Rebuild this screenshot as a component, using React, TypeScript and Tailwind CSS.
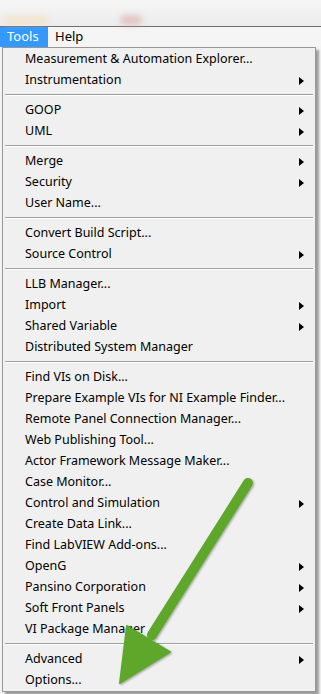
import { Fragment } from "react";

type Item = { label: string; sub?: boolean };

// groups of menu items, separator between each group
const groups: Item[][] = [
  [{ label: "Measurement & Automation Explorer..." }, { label: "Instrumentation", sub: true }],
  [{ label: "GOOP", sub: true }, { label: "UML", sub: true }],
  [{ label: "Merge", sub: true }, { label: "Security", sub: true }, { label: "User Name..." }],
  [{ label: "Convert Build Script..." }, { label: "Source Control", sub: true }],
  [
    { label: "LLB Manager..." },
    { label: "Import", sub: true },
    { label: "Shared Variable", sub: true },
    { label: "Distributed System Manager" },
  ],
  [
    { label: "Find VIs on Disk..." },
    { label: "Prepare Example VIs for NI Example Finder..." },
    { label: "Remote Panel Connection Manager..." },
    { label: "Web Publishing Tool..." },
    { label: "Actor Framework Message Maker..." },
    { label: "Case Monitor..." },
    { label: "Control and Simulation", sub: true },
    { label: "Create Data Link..." },
    { label: "Find LabVIEW Add-ons..." },
    { label: "OpenG", sub: true },
    { label: "Pansino Corporation", sub: true },
    { label: "Soft Front Panels", sub: true },
    { label: "VI Package Manager" },
  ],
  [{ label: "Advanced", sub: true }, { label: "Options..." }],
];

function MenuRow({ item }: { item: Item }) {
  return (
    <div className="h-[21px] flex items-center pl-[22px] pr-[11px] justify-between">
      <span className="whitespace-nowrap">{item.label}</span>
      {item.sub && (
        <span className="w-0 h-0 border-y-[4px] border-y-transparent border-l-[5px] border-l-black" />
      )}
    </div>
  );
}

function GreenArrow() {
  return (
    <svg
      className="absolute left-0 top-0 pointer-events-none"
      width="321"
      height="694"
      viewBox="0 0 321 694"
    >
      <defs>
        <filter id="sh" x="-20%" y="-20%" width="140%" height="140%">
          <feDropShadow dx="1" dy="1" stdDeviation="1.2" floodColor="#000" floodOpacity="0.35" />
        </filter>
      </defs>
      <g filter="url(#sh)" fill="#5ea72c" stroke="#5ea72c">
        <line x1="248" y1="483" x2="152" y2="635" strokeWidth="10" strokeLinecap="round" />
        <polygon points="120,683 127,626 170,652" strokeWidth="2" strokeLinejoin="round" />
      </g>
    </svg>
  );
}

export default function App() {
  return (
    <div
      className="relative w-[321px] h-[694px] overflow-hidden bg-[#f3f3f3] text-black text-[12.5px]"
      style={{ fontFamily: '"Noto Sans", "Liberation Sans", sans-serif' }}
    >
      {/* blurred window behind */}
      <div className="h-[26px] bg-gradient-to-b from-[#f6f6f6] to-[#ececec] relative">
        <div className="absolute left-[4px] top-[16px] w-[44px] h-[8px] bg-[#f3d9a8] opacity-50 blur-[3px]" />
        <div className="absolute left-[120px] top-[15px] w-[22px] h-[10px] bg-[#d49a98] opacity-50 blur-[3px] rounded-full" />
      </div>
      <div className="h-px bg-[#6f6f6f]" />

      {/* menu bar */}
      <div className="h-[20px] flex items-center bg-[#f5f5f5]">
        <div className="h-full w-[48px] bg-[#3399ff] text-white flex items-center pl-[7px] text-[13px]">
          Tools
        </div>
        <div className="pl-[7px] text-[13px]">Help</div>
      </div>

      {/* dropdown */}
      <div className="ml-[2px] w-[314px] border border-[#979797] bg-[#f0f0f0] pt-px shadow-[3px_3px_2px_rgba(0,0,0,0.35)]">
        {groups.map((g, gi) => (
          <Fragment key={gi}>
            {gi > 0 && (
              <div className="h-[9px] pt-[3px] px-[2px]">
                <div className="h-px bg-[#a0a0a0]" />
                <div className="h-px bg-white" />
              </div>
            )}
            {g.map((it) => (
              <MenuRow key={it.label} item={it} />
            ))}
          </Fragment>
        ))}
      </div>

      <GreenArrow />
    </div>
  );
}
